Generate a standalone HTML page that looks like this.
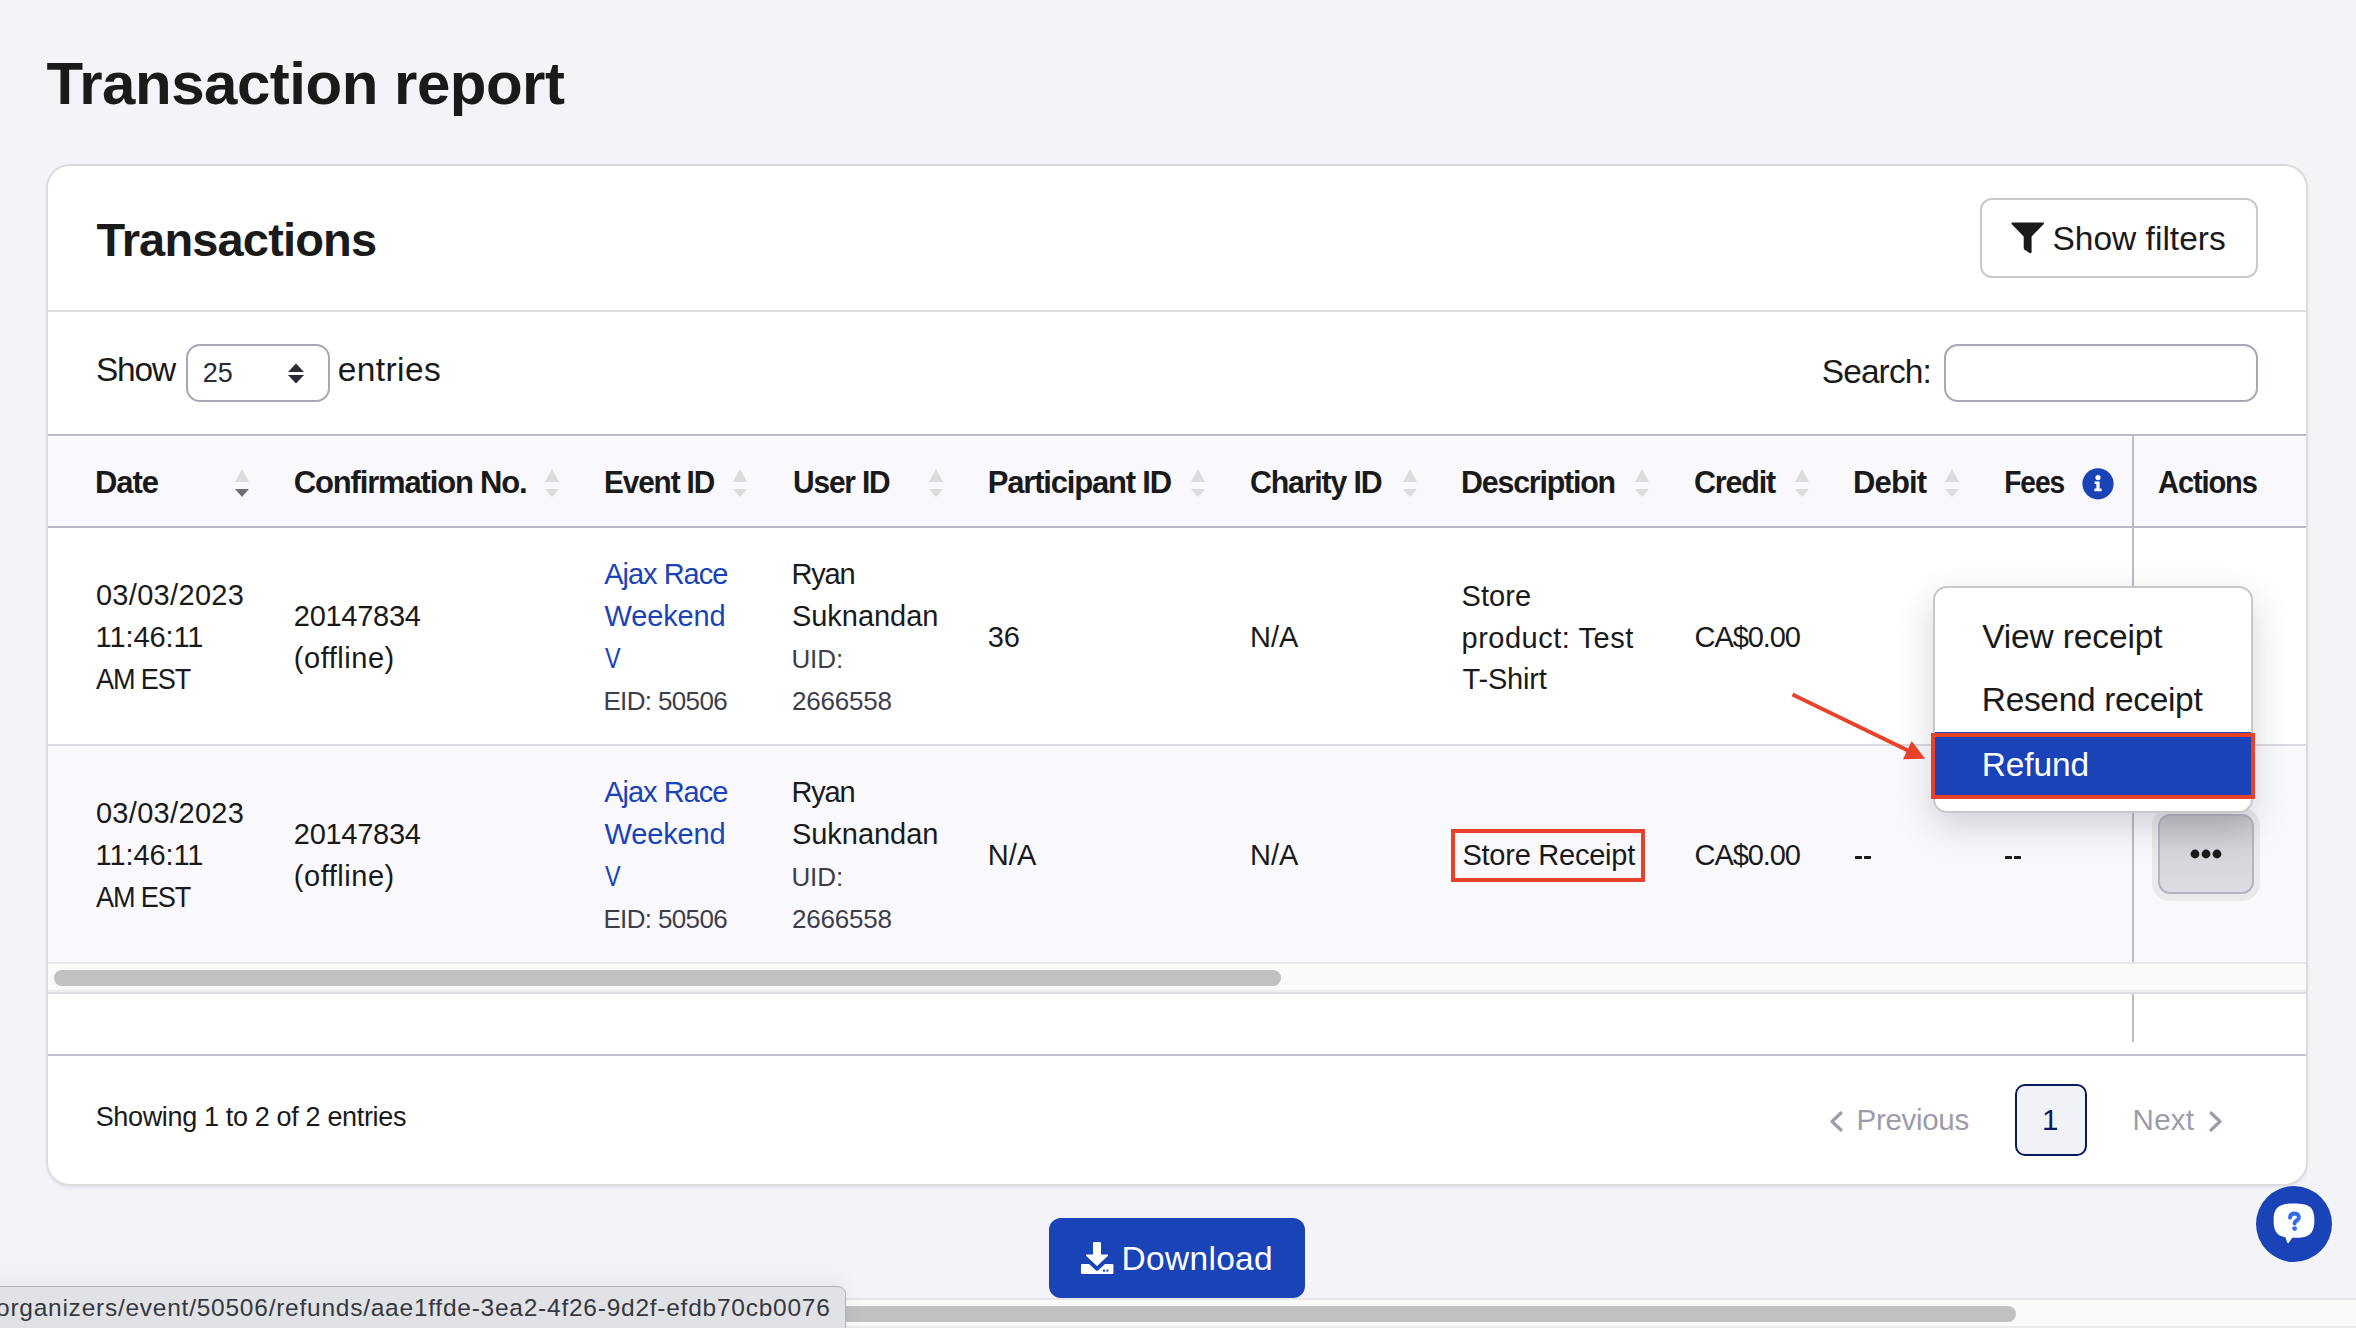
<!DOCTYPE html>
<html>
<head>
<meta charset="utf-8">
<title>Transaction report</title>
<style>
html,body{margin:0;padding:0;}
body{width:2356px;height:1328px;overflow:hidden;position:relative;background:#f3f3f8;font-family:"Liberation Sans",sans-serif;color:#1a1a1a;}
.t{position:absolute;white-space:nowrap;font-family:"Liberation Sans",sans-serif;}
.r{position:absolute;box-sizing:border-box;}
.a{position:absolute;z-index:2;}
</style>
</head>
<body>
<!-- card -->
<div class="r" style="left:46px;top:164px;width:2262px;height:1022px;background:#fff;border:2px solid #dcdcdc;border-radius:24px;box-shadow:0 2px 3px rgba(40,40,90,0.07);"></div>
<!-- header divider -->
<div class="r" style="left:48px;top:310px;width:2258px;height:2px;background:#dedede;"></div>
<!-- show filters button -->
<div class="r" style="left:1980px;top:198px;width:278px;height:80px;border:2px solid #c9c9c9;border-radius:12px;background:#fff;"></div>
<svg class="a" style="left:2008px;top:219px" width="40" height="38" viewBox="2008 219 40 38">
  <path d="M2012.2,222.4 L2043.2,222.4 Q2044.6,223 2043.6,224.3 L2031.6,236.4 L2031.6,252.2 Q2031.4,254 2029.8,253 L2024.6,249.8 Q2023.7,249.2 2023.7,248 L2023.7,236.4 L2011.8,224.3 Q2010.8,223 2012.2,222.4 Z" fill="#1a1a1a"/>
</svg>
<!-- select -->
<div class="r" style="left:186px;top:344px;width:144px;height:58px;border:2px solid #a9a6b7;border-radius:14px;background:#fff;"></div>
<svg class="a" style="left:286px;top:361px" width="20" height="24" viewBox="0 0 20 24">
  <polygon points="2,11 10,2.5 18,11" fill="#2b2b33"/><polygon points="2,14 18,14 10,22.5" fill="#2b2b33"/>
</svg>
<!-- search input -->
<div class="r" style="left:1944px;top:344px;width:314px;height:58px;border:2px solid #a9a6b7;border-radius:14px;background:#fff;box-shadow:inset 0 2px 2px rgba(0,0,0,0.03);"></div>

<!-- table header -->
<div class="r" style="left:48px;top:434px;width:2258px;height:2px;background:#b9b8c6;"></div>
<div class="r" style="left:48px;top:437px;width:2258px;height:88px;background:#f8f8fd;"></div>
<div class="r" style="left:48px;top:526px;width:2258px;height:2px;background:#b9b8c6;"></div>
<!-- row 1 border -->
<div class="r" style="left:48px;top:744px;width:2258px;height:2px;background:#d9d9e1;"></div>
<!-- row 2 bg -->
<div class="r" style="left:48px;top:746px;width:2258px;height:216px;background:#f9f9fd;"></div>
<div class="r" style="left:48px;top:962px;width:2258px;height:2px;background:#e6e6e8;"></div>
<!-- scroll track -->
<div class="r" style="left:48px;top:964px;width:2258px;height:26px;background:#fafafa;"></div>
<div class="r" style="left:54px;top:970px;width:1227px;height:16px;background:#c1c1c1;border-radius:8px;"></div>
<div class="r" style="left:48px;top:990px;width:2258px;height:2px;background:#ededed;"></div>
<div class="r" style="left:48px;top:992px;width:2258px;height:2px;background:#dcdce3;"></div>
<!-- footer border -->
<div class="r" style="left:48px;top:1054px;width:2258px;height:2px;background:#c3c2d0;"></div>
<!-- sticky column vertical line -->
<div class="r" style="left:2132px;top:436px;width:2px;height:526px;background:#bdbbca;"></div>
<div class="r" style="left:2132px;top:994px;width:2px;height:48px;background:#bdbbca;"></div>

<!-- info icon -->
<svg class="a" style="left:2082px;top:468px" width="32" height="32" viewBox="0 0 32 32">
  <circle cx="16" cy="15.8" r="15.6" fill="#1a43b8"/>
  <circle cx="16" cy="9.6" r="2.6" fill="#fff"/>
  <path d="M12.6,13.4 L17.6,13.4 L17.6,20.6 L19.6,20.6 L19.6,23.2 L12.4,23.2 L12.4,20.6 L14.4,20.6 L14.4,16 L12.6,16 Z" fill="#fff"/>
</svg>

<svg class="a" style="left:234px;top:468px" width="16" height="30" viewBox="0 0 16 30"><polygon points="1,14 8,1 15,14" fill="#dcdcdf"/><polygon points="1,21 15,21 8,29" fill="#6f6f75"/></svg><svg class="a" style="left:544px;top:468px" width="16" height="30" viewBox="0 0 16 30"><polygon points="1,14 8,1 15,14" fill="#dcdcdf"/><polygon points="1,21 15,21 8,29" fill="#dcdcdf"/></svg><svg class="a" style="left:732px;top:468px" width="16" height="30" viewBox="0 0 16 30"><polygon points="1,14 8,1 15,14" fill="#dcdcdf"/><polygon points="1,21 15,21 8,29" fill="#dcdcdf"/></svg><svg class="a" style="left:928px;top:468px" width="16" height="30" viewBox="0 0 16 30"><polygon points="1,14 8,1 15,14" fill="#dcdcdf"/><polygon points="1,21 15,21 8,29" fill="#dcdcdf"/></svg><svg class="a" style="left:1190px;top:468px" width="16" height="30" viewBox="0 0 16 30"><polygon points="1,14 8,1 15,14" fill="#dcdcdf"/><polygon points="1,21 15,21 8,29" fill="#dcdcdf"/></svg><svg class="a" style="left:1402px;top:468px" width="16" height="30" viewBox="0 0 16 30"><polygon points="1,14 8,1 15,14" fill="#dcdcdf"/><polygon points="1,21 15,21 8,29" fill="#dcdcdf"/></svg><svg class="a" style="left:1634px;top:468px" width="16" height="30" viewBox="0 0 16 30"><polygon points="1,14 8,1 15,14" fill="#dcdcdf"/><polygon points="1,21 15,21 8,29" fill="#dcdcdf"/></svg><svg class="a" style="left:1794px;top:468px" width="16" height="30" viewBox="0 0 16 30"><polygon points="1,14 8,1 15,14" fill="#dcdcdf"/><polygon points="1,21 15,21 8,29" fill="#dcdcdf"/></svg><svg class="a" style="left:1944px;top:468px" width="16" height="30" viewBox="0 0 16 30"><polygon points="1,14 8,1 15,14" fill="#dcdcdf"/><polygon points="1,21 15,21 8,29" fill="#dcdcdf"/></svg>

<!-- ... button -->
<div class="r" style="left:2152px;top:808px;width:108px;height:93px;border-radius:18px;background:#eaeaed;z-index:3;"></div>
<div class="r" style="left:2158px;top:814px;width:96px;height:80px;border:2px solid #b5b4c3;border-radius:12px;background:linear-gradient(#c4c4ca,#d5d5dc 45%,#dcdce3);z-index:4;"></div>
<svg class="a" style="left:2186px;top:845px;z-index:5" width="40" height="18" viewBox="0 0 40 18">
  <circle cx="9" cy="9" r="4.4" fill="#1a1a1a"/><circle cx="20" cy="9" r="4.4" fill="#1a1a1a"/><circle cx="31" cy="9" r="4.4" fill="#1a1a1a"/>
</svg>

<!-- dashes -->
<div class="r" style="left:1855px;top:856px;width:7px;height:3px;background:#1a1a1a;border-radius:0.5px;"></div>
<div class="r" style="left:1864px;top:856px;width:7px;height:3px;background:#1a1a1a;border-radius:0.5px;"></div>
<div class="r" style="left:2005px;top:856px;width:7px;height:3px;background:#1a1a1a;border-radius:0.5px;"></div>
<div class="r" style="left:2014px;top:856px;width:7px;height:3px;background:#1a1a1a;border-radius:0.5px;"></div>

<!-- dropdown menu -->
<div class="r" style="left:1933px;top:586px;width:320px;height:227px;background:#fff;border:2px solid #c8c8c8;border-radius:14px;box-shadow:0 14px 36px rgba(30,30,50,0.18);z-index:18;"></div>
<div class="r" style="left:1935px;top:732px;width:316px;height:64px;background:#1a43b8;z-index:19;"></div>
<div class="r" style="left:1931px;top:733px;width:324px;height:66px;border:4px solid #e8412a;z-index:21;"></div>

<!-- store receipt red box -->
<div class="r" style="left:1451px;top:829px;width:194px;height:53px;border:4px solid #e8412a;z-index:6;"></div>

<!-- red arrow -->
<svg class="a" style="left:1780px;top:680px;z-index:23" width="160" height="90" viewBox="1780 680 160 90">
  <line x1="1792.5" y1="694.5" x2="1909" y2="751" stroke="#e8432a" stroke-width="4"/>
  <polygon points="1911.7,741 1903,759.2 1925.2,758.8" fill="#e8432a"/>
</svg>

<!-- pagination -->
<svg class="a" style="left:1828px;top:1110px" width="18" height="24" viewBox="0 0 18 24">
  <polyline points="13,3 4,11.5 13,20" fill="none" stroke="#9d9cab" stroke-width="3.2" stroke-linecap="round" stroke-linejoin="round"/>
</svg>
<div class="r" style="left:2015px;top:1084px;width:72px;height:72px;border:2px solid #0b1a5e;border-radius:10px;background:#f1f2f7;"></div>
<svg class="a" style="left:2206px;top:1110px" width="18" height="24" viewBox="0 0 18 24">
  <polyline points="5,3 14,11.5 5,20" fill="none" stroke="#9d9cab" stroke-width="3.2" stroke-linecap="round" stroke-linejoin="round"/>
</svg>

<!-- download button -->
<div class="r" style="left:1049px;top:1218px;width:256px;height:80px;background:#1a43b8;border-radius:12px;"></div>
<svg class="a" style="left:1078px;top:1240px;z-index:5" width="38" height="36" viewBox="1078 1240 38 36">
  <path d="M1094.2,1242 L1099.8,1242 Q1101,1242 1101,1243.2 L1101,1254.6 L1107.6,1254.6 Q1108.6,1255 1107.8,1256 L1097.6,1265.6 Q1097,1266.2 1096.4,1265.6 L1086.2,1256 Q1085.4,1255 1086.4,1254.6 L1093,1254.6 L1093,1243.2 Q1093,1242 1094.2,1242 Z" fill="#fff"/>
  <path d="M1081,1264 L1089,1264 L1096,1270.4 Q1097,1271.2 1098,1270.4 L1105,1264 L1112.4,1264 Q1113.4,1264 1113.4,1265 L1113.4,1273 Q1113.4,1274 1112.4,1274 L1082,1274 Q1081,1274 1081,1273 L1081,1265 Q1081,1264 1082,1264 Z" fill="#fff"/>
  <rect x="1103" y="1269.6" width="2" height="2" fill="#1a43b8"/><rect x="1106.4" y="1269.6" width="2" height="2" fill="#1a43b8"/>
</svg>

<!-- help button -->
<svg class="a" style="left:2254px;top:1184px;z-index:5" width="80" height="80" viewBox="2254 1184 80 80">
  <circle cx="2294" cy="1224" r="38" fill="#1a43b8"/>
  <path d="M2294,1203.6 C2309,1203.6 2314.4,1207 2314.4,1220.2 C2314.4,1233.6 2309,1237.8 2296,1237.8 L2292.2,1237.8 L2289,1242.6 Q2288,1243.8 2287.2,1242.4 L2285.4,1237.2 C2276.6,1235.6 2273.6,1230.6 2273.6,1220.4 C2273.6,1207.2 2279,1203.6 2294,1203.6 Z" fill="#fff"/>
  <path d="M2290,1217.6 Q2290.2,1213.6 2294.6,1213.6 Q2299,1213.8 2298.8,1217.4 Q2298.6,1219.6 2296,1221 Q2294.6,1221.8 2294.6,1223.6" fill="none" stroke="#2f6fe6" stroke-width="4" stroke-linecap="round" stroke-linejoin="round"/>
  <circle cx="2294.6" cy="1228.6" r="2.4" fill="#2f6fe6"/>
</svg>

<!-- page horizontal scrollbar -->
<div class="r" style="left:0;top:1298px;width:2356px;height:2px;background:#e6e6e6;z-index:30;"></div>
<div class="r" style="left:0;top:1300px;width:2356px;height:26px;background:#fafafa;z-index:30;"></div>
<div class="r" style="left:0;top:1326px;width:2356px;height:2px;background:#ebebeb;z-index:30;"></div>
<div class="r" style="left:6px;top:1306px;width:2010px;height:16px;background:#c1c1c1;border-radius:8px;z-index:31;"></div>

<!-- status tooltip -->
<div class="r" style="left:-10px;top:1286px;width:856px;height:60px;background:#e1e2e6;border:1.5px solid #b3b3b6;border-radius:8px;box-shadow:0 -6px 18px rgba(0,0,0,0.06);z-index:39;"></div>

<div class="t" style="left:46.40px;top:54.00px;font-size:60px;line-height:60px;color:#1a1a1a;letter-spacing:-0.483px;z-index:1;font-weight:bold">Transaction report</div>
<div class="t" style="left:96.40px;top:216.00px;font-size:47px;line-height:47px;color:#1a1a1a;letter-spacing:-0.846px;z-index:1;font-weight:bold">Transactions</div>
<div class="t" style="left:2052.40px;top:221.80px;font-size:33.5px;line-height:33.5px;color:#1a1a1a;letter-spacing:0.019px;z-index:1">Show filters</div>
<div class="t" style="left:95.90px;top:352.80px;font-size:33.5px;line-height:33.5px;color:#1a1a1a;letter-spacing:-1.200px;z-index:1;transform:scaleX(0.9987);transform-origin:1.00px 0">Show</div>
<div class="t" style="left:337.80px;top:352.80px;font-size:33.5px;line-height:33.5px;color:#1a1a1a;letter-spacing:0.400px;z-index:1">entries</div>
<div class="t" style="left:202.80px;top:360.00px;font-size:27px;line-height:27px;color:#2a2a33;letter-spacing:0.000px;z-index:1">25</div>
<div class="t" style="left:1821.70px;top:354.80px;font-size:33.5px;line-height:33.5px;color:#1a1a1a;letter-spacing:-0.891px;z-index:1">Search:</div>
<div class="t" style="left:95.00px;top:466.60px;font-size:31px;line-height:31px;color:#1a1a1a;letter-spacing:-1.050px;z-index:1;font-weight:bold">Date</div>
<div class="t" style="left:293.80px;top:466.60px;font-size:31px;line-height:31px;color:#1a1a1a;letter-spacing:-1.167px;z-index:1;font-weight:bold">Confirmation No.</div>
<div class="t" style="left:603.80px;top:466.60px;font-size:31px;line-height:31px;color:#1a1a1a;letter-spacing:-1.200px;z-index:1;transform:scaleX(0.9608);transform-origin:2.00px 0;font-weight:bold">Event ID</div>
<div class="t" style="left:792.50px;top:466.60px;font-size:31px;line-height:31px;color:#1a1a1a;letter-spacing:-1.200px;z-index:1;transform:scaleX(0.9634);transform-origin:1.00px 0;font-weight:bold">User ID</div>
<div class="t" style="left:987.80px;top:466.60px;font-size:31px;line-height:31px;color:#1a1a1a;letter-spacing:-1.195px;z-index:1;font-weight:bold">Participant ID</div>
<div class="t" style="left:1250.40px;top:466.60px;font-size:31px;line-height:31px;color:#1a1a1a;letter-spacing:-1.200px;z-index:1;transform:scaleX(0.9774);transform-origin:1.00px 0;font-weight:bold">Charity ID</div>
<div class="t" style="left:1461.30px;top:466.60px;font-size:31px;line-height:31px;color:#1a1a1a;letter-spacing:-1.200px;z-index:1;transform:scaleX(0.9782);transform-origin:2.00px 0;font-weight:bold">Description</div>
<div class="t" style="left:1693.90px;top:466.60px;font-size:31px;line-height:31px;color:#1a1a1a;letter-spacing:-1.200px;z-index:1;transform:scaleX(0.9825);transform-origin:1.00px 0;font-weight:bold">Credit</div>
<div class="t" style="left:1853.00px;top:466.60px;font-size:31px;line-height:31px;color:#1a1a1a;letter-spacing:-0.869px;z-index:1;font-weight:bold">Debit</div>
<div class="t" style="left:2004.20px;top:466.60px;font-size:31px;line-height:31px;color:#1a1a1a;letter-spacing:-1.200px;z-index:1;transform:scaleX(0.9088);transform-origin:2.00px 0;font-weight:bold">Fees</div>
<div class="t" style="left:2158.40px;top:466.60px;font-size:31px;line-height:31px;color:#1a1a1a;letter-spacing:-1.200px;z-index:1;transform:scaleX(0.9388);transform-origin:0.00px 0;font-weight:bold">Actions</div>
<div class="t" style="left:95.90px;top:580.70px;font-size:29px;line-height:29px;color:#1a1a1a;letter-spacing:0.321px;z-index:1">03/03/2023</div>
<div class="t" style="left:95.60px;top:622.70px;font-size:29px;line-height:29px;color:#1a1a1a;letter-spacing:-0.107px;z-index:1">11:46:11</div>
<div class="t" style="left:96.10px;top:664.70px;font-size:29px;line-height:29px;color:#1a1a1a;letter-spacing:-1.200px;z-index:1;transform:scaleX(0.9341);transform-origin:0.00px 0">AM EST</div>
<div class="t" style="left:293.80px;top:602.00px;font-size:29px;line-height:29px;color:#1a1a1a;letter-spacing:-0.271px;z-index:1">20147834</div>
<div class="t" style="left:293.80px;top:644.00px;font-size:29px;line-height:29px;color:#1a1a1a;letter-spacing:0.535px;z-index:1">(offline)</div>
<div class="t" style="left:604.20px;top:559.90px;font-size:29px;line-height:29px;color:#1a43b8;letter-spacing:-1.005px;z-index:1">Ajax Race</div>
<div class="t" style="left:604.50px;top:601.60px;font-size:29px;line-height:29px;color:#1a43b8;letter-spacing:-0.127px;z-index:1">Weekend</div>
<div class="t" style="left:604.50px;top:643.70px;font-size:29px;line-height:29px;color:#1a43b8;letter-spacing:0.000px;z-index:1;transform:scaleX(0.8100);transform-origin:0.00px 0">V</div>
<div class="t" style="left:603.40px;top:687.70px;font-size:26px;line-height:26px;color:#3e3e4a;letter-spacing:-0.648px;z-index:1">EID: 50506</div>
<div class="t" style="left:791.40px;top:559.90px;font-size:29px;line-height:29px;color:#1a1a1a;letter-spacing:-1.157px;z-index:1">Ryan</div>
<div class="t" style="left:791.90px;top:601.60px;font-size:29px;line-height:29px;color:#1a1a1a;letter-spacing:-0.027px;z-index:1">Suknandan</div>
<div class="t" style="left:791.40px;top:645.70px;font-size:26px;line-height:26px;color:#3e3e4a;letter-spacing:-0.059px;z-index:1">UID:</div>
<div class="t" style="left:791.90px;top:687.70px;font-size:26px;line-height:26px;color:#3e3e4a;letter-spacing:-0.193px;z-index:1">2666558</div>
<div class="t" style="left:1694.60px;top:622.80px;font-size:29px;line-height:29px;color:#1a1a1a;letter-spacing:-1.105px;z-index:1">CA$0.00</div>
<div class="t" style="left:1250.00px;top:622.80px;font-size:29px;line-height:29px;color:#1a1a1a;letter-spacing:0.000px;z-index:1">N/A</div>
<div class="t" style="left:987.70px;top:622.80px;font-size:29px;line-height:29px;color:#1a1a1a;letter-spacing:0.000px;z-index:1">36</div>
<div class="t" style="left:1461.50px;top:581.50px;font-size:29px;line-height:29px;color:#1a1a1a;letter-spacing:0.079px;z-index:1">Store</div>
<div class="t" style="left:1461.50px;top:623.60px;font-size:29px;line-height:29px;color:#1a1a1a;letter-spacing:0.519px;z-index:1">product: Test</div>
<div class="t" style="left:1462.50px;top:665.00px;font-size:29px;line-height:29px;color:#1a1a1a;letter-spacing:-0.174px;z-index:1">T-Shirt</div>
<div class="t" style="left:95.90px;top:798.70px;font-size:29px;line-height:29px;color:#1a1a1a;letter-spacing:0.321px;z-index:1">03/03/2023</div>
<div class="t" style="left:95.60px;top:840.70px;font-size:29px;line-height:29px;color:#1a1a1a;letter-spacing:-0.107px;z-index:1">11:46:11</div>
<div class="t" style="left:96.10px;top:882.70px;font-size:29px;line-height:29px;color:#1a1a1a;letter-spacing:-1.200px;z-index:1;transform:scaleX(0.9341);transform-origin:0.00px 0">AM EST</div>
<div class="t" style="left:293.80px;top:820.00px;font-size:29px;line-height:29px;color:#1a1a1a;letter-spacing:-0.271px;z-index:1">20147834</div>
<div class="t" style="left:293.80px;top:862.00px;font-size:29px;line-height:29px;color:#1a1a1a;letter-spacing:0.535px;z-index:1">(offline)</div>
<div class="t" style="left:604.20px;top:777.90px;font-size:29px;line-height:29px;color:#1a43b8;letter-spacing:-1.005px;z-index:1">Ajax Race</div>
<div class="t" style="left:604.50px;top:819.60px;font-size:29px;line-height:29px;color:#1a43b8;letter-spacing:-0.127px;z-index:1">Weekend</div>
<div class="t" style="left:604.50px;top:861.70px;font-size:29px;line-height:29px;color:#1a43b8;letter-spacing:0.000px;z-index:1;transform:scaleX(0.8100);transform-origin:0.00px 0">V</div>
<div class="t" style="left:603.40px;top:905.70px;font-size:26px;line-height:26px;color:#3e3e4a;letter-spacing:-0.648px;z-index:1">EID: 50506</div>
<div class="t" style="left:791.40px;top:777.90px;font-size:29px;line-height:29px;color:#1a1a1a;letter-spacing:-1.157px;z-index:1">Ryan</div>
<div class="t" style="left:791.90px;top:819.60px;font-size:29px;line-height:29px;color:#1a1a1a;letter-spacing:-0.027px;z-index:1">Suknandan</div>
<div class="t" style="left:791.40px;top:863.70px;font-size:26px;line-height:26px;color:#3e3e4a;letter-spacing:-0.059px;z-index:1">UID:</div>
<div class="t" style="left:791.90px;top:905.70px;font-size:26px;line-height:26px;color:#3e3e4a;letter-spacing:-0.193px;z-index:1">2666558</div>
<div class="t" style="left:1694.60px;top:840.80px;font-size:29px;line-height:29px;color:#1a1a1a;letter-spacing:-1.105px;z-index:1">CA$0.00</div>
<div class="t" style="left:1250.00px;top:840.80px;font-size:29px;line-height:29px;color:#1a1a1a;letter-spacing:0.000px;z-index:1">N/A</div>
<div class="t" style="left:987.80px;top:840.60px;font-size:29px;line-height:29px;color:#1a1a1a;letter-spacing:0.100px;z-index:1">N/A</div>
<div class="t" style="left:1462.40px;top:840.70px;font-size:29px;line-height:29px;color:#1a1a1a;letter-spacing:-0.237px;z-index:1">Store Receipt</div>
<div class="t" style="left:95.70px;top:1104.10px;font-size:27px;line-height:27px;color:#1a1a1a;letter-spacing:-0.346px;z-index:1">Showing 1 to 2 of 2 entries</div>
<div class="t" style="left:1856.60px;top:1105.10px;font-size:29.5px;line-height:29.5px;color:#9d9cab;letter-spacing:-0.318px;z-index:1">Previous</div>
<div class="t" style="left:2042.00px;top:1105.10px;font-size:29.5px;line-height:29.5px;color:#0b1a5e;letter-spacing:0.000px;z-index:1">1</div>
<div class="t" style="left:2132.60px;top:1105.10px;font-size:29.5px;line-height:29.5px;color:#9d9cab;letter-spacing:0.247px;z-index:1">Next</div>
<div class="t" style="left:1982.20px;top:619.90px;font-size:33.5px;line-height:33.5px;color:#1a1a1a;letter-spacing:-0.132px;z-index:20">View receipt</div>
<div class="t" style="left:1981.80px;top:683.30px;font-size:33.5px;line-height:33.5px;color:#1a1a1a;letter-spacing:-0.340px;z-index:20">Resend receipt</div>
<div class="t" style="left:1981.80px;top:748.00px;font-size:33.5px;line-height:33.5px;color:#ffffff;letter-spacing:-0.139px;z-index:22">Refund</div>
<div class="t" style="left:1121.60px;top:1242.00px;font-size:33.5px;line-height:33.5px;color:#ffffff;letter-spacing:0.293px;z-index:5">Download</div>
<div class="t" style="left:-4.00px;top:1295.60px;font-size:24.5px;line-height:24.5px;color:#35383e;letter-spacing:0.753px;z-index:40">organizers/event/50506/refunds/aae1ffde-3ea2-4f26-9d2f-efdb70cb0076</div>
</body>
</html>
